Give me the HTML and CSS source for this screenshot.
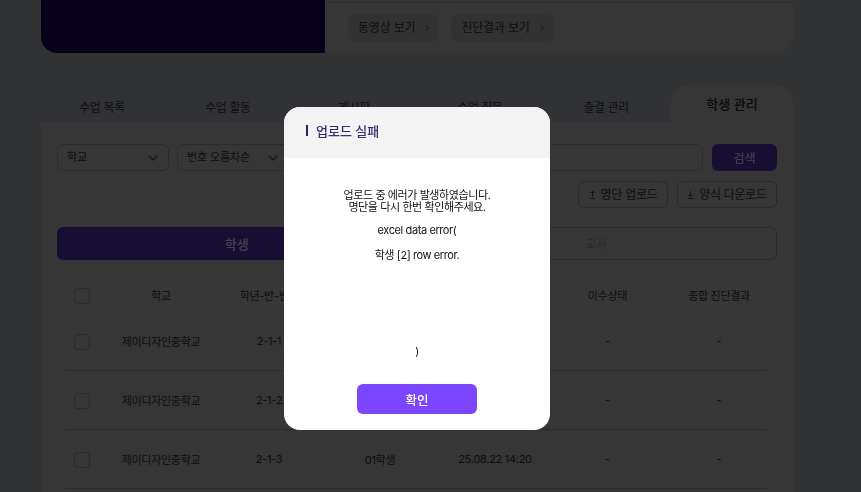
FILE: index.html
```html
<!DOCTYPE html>
<html lang="ko">
<head>
    <meta charset="UTF-8">
    <meta name="viewport" content="width=device-width, initial-scale=1.0">
    <title>학생 관리</title>
    <link rel="stylesheet" href="styles.css">
</head>
<body>
    <div class="page">
        <div class="class-card">
            <div class="class-thumb"></div>
            <div class="class-info">
                <div class="class-links">
                    <a class="link-btn">동영상 보기 <svg class="arrow-right" viewBox="0 0 6 8"><path d="M1.500 1l3 3-3 3"/></svg></a>
                    <a class="link-btn">진단결과 보기 <svg class="arrow-right" viewBox="0 0 6 8"><path d="M1.500 1l3 3-3 3"/></svg></a>
                </div>
            </div>
        </div>

        <div class="tabs">
            <div class="tab">수업 목록</div>
            <div class="tab">수업 활동</div>
            <div class="tab">게시판</div>
            <div class="tab">수업 질문</div>
            <div class="tab">출결 관리</div>
            <div class="tab active">학생 관리</div>
        </div>

        <div class="panel">
            <div class="filters">
                <div class="select"><span>학교</span><svg class="chevron" viewBox="0 0 10 6"><path d="M.6.6L5 5 9.400.6"/></svg></div>
                <div class="select"><span>번호 오름차순</span><svg class="chevron" viewBox="0 0 10 6"><path d="M.6.6L5 5 9.400.6"/></svg></div>
                <div class="search-input"></div>
                <button class="search-btn">검색</button>
            </div>

            <div class="actions">
                <button class="outline-btn upload"><svg class="small-arrow" viewBox="0 0 7 9"><path d="M3.500 7V1.200M1.300 3.400l2.200-2.200 2.200 2.200M.8 8.500h5.400"/></svg>명단 업로드</button>
                <button class="outline-btn download"><svg class="small-arrow" viewBox="0 0 7 9"><path d="M3.500 1v5.800M1.300 4.600l2.200 2.200 2.200-2.200M.8 8.500h5.400"/></svg>양식 다운로드</button>
            </div>

            <div class="toggle">
                <div class="toggle-item on">학생</div>
                <div class="toggle-item">교사</div>
            </div>

            <div class="row head">
                <div class="cell"><span class="check"></span></div>
                <div class="cell">학교</div>
                <div class="cell">학년-반-번호</div>
                <div class="cell">이름</div>
                <div class="cell">최근 접속일</div>
                <div class="cell">이수상태</div>
                <div class="cell">종합 진단결과</div>
            </div>
            <div class="row">
                <div class="cell"><span class="check"></span></div>
                <div class="cell">제이디자인중학교</div>
                <div class="cell">2-1-1</div>
                <div class="cell">01학생</div>
                <div class="cell">25.08.22 14:20</div>
                <div class="cell">-</div>
                <div class="cell">-</div>
            </div>
            <div class="row">
                <div class="cell"><span class="check"></span></div>
                <div class="cell">제이디자인중학교</div>
                <div class="cell">2-1-2</div>
                <div class="cell">01학생</div>
                <div class="cell">25.08.22 14:20</div>
                <div class="cell">-</div>
                <div class="cell">-</div>
            </div>
            <div class="row">
                <div class="cell"><span class="check"></span></div>
                <div class="cell">제이디자인중학교</div>
                <div class="cell">2-1-3</div>
                <div class="cell">01학생</div>
                <div class="cell">25.08.22 14:20</div>
                <div class="cell">-</div>
                <div class="cell">-</div>
            </div>
        </div>
    </div>

    <div class="overlay">
        <div class="modal">
            <div class="modal-head"><span class="modal-bar"></span>업로드 실패</div>
            <div class="modal-body">
                <p class="modal-msg">업로드 중 에러가 발생하였습니다.<br>명단을 다시 한번 확인해주세요.</p>
                <p class="modal-line first">excel data error(</p>
                <p class="modal-line">학생 [2] row error.</p>
                <p class="modal-line last">)</p>
            </div>
            <div class="modal-foot">
                <button class="ok-btn">확인</button>
            </div>
        </div>
    </div>
</body>
</html>
```

FILE: styles.css
```css
* {
    box-sizing: border-box;
}

body {
    margin: 0;
    height: 492px;
    overflow: hidden;
    background-color: #a0a7ad;
    color: #333;
    font-family: Inter, 'Noto Sans CJK KR', sans-serif;
    font-size: 12px;
}

.page {
    width: 752px;
    margin-left: 41px;
}

/* top class card */
.class-card {
    display: flex;
    height: 53px;
    background-color: #b4b4b4;
    border-radius: 0 0 16px 16px;
    overflow: hidden;
}

.class-thumb {
    width: 284px;
    background-color: #170057;
}

.class-info {
    flex: 1;
    padding-top: 2px;
}

.class-links {
    display: flex;
    gap: 12px;
    padding: 11px 0 0 23px;
    border-top: 1px solid #969696;
}

.link-btn {
    display: flex;
    align-items: center;
    gap: 9px;
    height: 28px;
    padding: 0 9px 4px 10px;
    background-color: #a8a8a8;
    border-radius: 8px;
    letter-spacing: -0.2px;
}

.arrow-right {
    width: 6px;
    height: 8px;
    margin-top: 4px;
    fill: none;
    stroke: #555;
    stroke-width: 1;
}

/* tabs */
.tabs {
    display: flex;
    align-items: flex-end;
    gap: 4px;
    height: 69px;
}

.tab {
    display: flex;
    align-items: center;
    justify-content: center;
    width: 122px;
    height: 28px;
    padding-bottom: 3px;
    background-color: #a3a9b6;
    border-radius: 16px 16px 0 0;
    letter-spacing: -0.4px;
}

.tab.active {
    height: 37px;
    padding-bottom: 1px;
    background-color: #b4b4b4;
    color: #222;
    font-size: 13px;
    font-weight: 500;
    letter-spacing: 0;
}

.panel {
    height: 370px;
    padding: 22px 16px 0;
    background-color: #b4b4b4;
}

.filters {
    display: flex;
    gap: 8px;
    height: 27px;
}

.select {
    display: flex;
    align-items: center;
    justify-content: space-between;
    width: 112px;
    padding: 0 10px 0 9px;
    border: 1px solid #929292;
    border-radius: 6px;
    font-size: 11px;
    letter-spacing: -0.1px;
}

.select span {
    margin-bottom: 3px;
}

.chevron {
    width: 10px;
    height: 6px;
    fill: none;
    stroke: #333;
    stroke-width: 1.1;
}

.search-input {
    flex: 1;
    border: 1px solid #929292;
    border-radius: 6px;
}

.search-btn {
    width: 65px;
    margin-left: 1px;
    border: none;
    border-radius: 6px;
    background-color: #532faa;
    color: #e8deff;
    font: inherit;
}

.actions {
    display: flex;
    justify-content: flex-end;
    gap: 9px;
    margin-top: 10px;
}

.outline-btn {
    display: flex;
    align-items: center;
    justify-content: center;
    gap: 5px;
    height: 27px;
    padding: 0 0 2px;
    background-color: transparent;
    border: 1px solid #8c8c8c;
    border-radius: 6px;
    color: #333;
    font: inherit;
    letter-spacing: -0.3px;
}

.outline-btn.upload {
    width: 90px;
}

.outline-btn.download {
    width: 100px;
}

.small-arrow {
    width: 7px;
    height: 9px;
    margin-top: 2px;
    fill: none;
    stroke: #333;
    stroke-width: 0.9;
}

.toggle {
    display: flex;
    height: 33px;
    margin-top: 19px;
}

.toggle-item {
    display: flex;
    align-items: center;
    justify-content: center;
    flex: 1;
    border: 1px solid #929292;
    border-left: none;
    border-radius: 0 6px 6px 0;
    color: #8c8c8c;
}

.toggle-item.on {
    border: none;
    border-radius: 6px 0 0 6px;
    background-color: #532faa;
    color: #e8deff;
    font-size: 13px;
    font-weight: 500;
}

/* table */
.row {
    display: grid;
    grid-template-columns: 32px 126px 90px 132px 98px 127px 96px;
    align-items: center;
    width: 701px;
    height: 59px;
    margin-left: 9px;
    border-bottom: 1px solid #929292;
}

.row.head {
    width: 720px;
    height: 34px;
    margin: 18px 0 0;
    padding-left: 9px;
    background-color: #b7b7b7;
    border-bottom: none;
    border-radius: 8px;
}

.cell {
    display: flex;
    justify-content: center;
    padding-bottom: 1px;
    white-space: nowrap;
    font-size: 11px;
    letter-spacing: -0.3px;
}

.check {
    width: 16px;
    height: 16px;
    margin-top: 2px;
    border: 1px solid #8c8c8c;
    border-radius: 4px;
}

/* error modal */
.overlay {
    position: fixed;
    top: 0;
    left: 0;
    width: 100%;
    height: 100%;
    background-color: rgba(0, 0, 0, 0.7);
}

.modal {
    position: absolute;
    top: 107px;
    left: 284px;
    display: flex;
    flex-direction: column;
    width: 266px;
    height: 323px;
    background-color: #fff;
    border-radius: 16px;
    overflow: hidden;
}

.modal-head {
    display: flex;
    align-items: center;
    gap: 8px;
    height: 51px;
    padding: 0 0 5px 22px;
    background-color: #f3f3f3;
    color: #3c2a6e;
    font-size: 13px;
    font-weight: 500;
}

.modal-bar {
    width: 2px;
    height: 11px;
    background-color: #3a1a70;
}

.modal-body {
    flex: 1;
    padding-top: 31px;
    color: #111;
    font-size: 11px;
    letter-spacing: -0.4px;
    line-height: 12px;
    text-align: center;
}

.modal-body p {
    margin: 0;
}

.modal-body .modal-line {
    margin-top: 13px;
}

.modal-body .modal-line.first {
    margin-top: 11px;
}

.modal-body .modal-line.last {
    margin-top: 84px;
}

.modal-foot {
    display: flex;
    justify-content: center;
    padding-bottom: 16px;
}

.ok-btn {
    width: 120px;
    height: 30px;
    padding: 0;
    background-color: #7c45ff;
    border: none;
    border-radius: 6px;
    color: #fff;
    font: inherit;
    font-size: 12.500px;
    font-weight: 500;
}
```
